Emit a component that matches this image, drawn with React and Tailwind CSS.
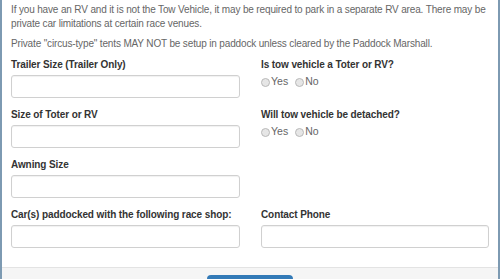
export default function App() {
  const Radio = ({ label }) => (
    <span className="flex items-center">
      <span className="inline-block h-[9px] w-[9px] rounded-full border border-[#b9b9b9] bg-[#e6e6e6]" />
      <span className="ml-[1px]">{label}</span>
    </span>
  );

  const Field = ({ label }) => (
    <div className="h-[50px]">
      <div className="h-[14px] whitespace-nowrap text-[10px] font-bold leading-[14px] tracking-[-0.1px] text-[#333]">{label}</div>
      <div className="mt-[3px] h-[23px] rounded-[3px] border border-[#d0d0d0] bg-white shadow-[inset_0_1px_1px_rgba(0,0,0,0.06)]" />
    </div>
  );

  const RadioField = ({ label }) => (
    <div className="h-[50px]">
      <div className="h-[14px] whitespace-nowrap text-[10px] font-bold leading-[14px] tracking-[-0.1px] text-[#333]">{label}</div>
      <div className="mt-[3px] flex h-[14px] items-center gap-[7px] text-[10.5px] text-[#666]">
        <Radio label="Yes" />
        <Radio label="No" />
      </div>
    </div>
  );

  return (
    <div
      className="flex h-[279px] w-[500px] flex-col overflow-hidden border-l-2 border-r-2 border-[#7d9ab2] bg-white"
      style={{ fontFamily: '"Liberation Sans", Arial, sans-serif' }}
    >
      <div className="flex-1 px-[9px] pt-[3px]">
        <p className="text-[10px] leading-[14px] tracking-[-0.15px] text-[#666]">
          If you have an RV and it is not the Tow Vehicle, it may be required to park in a separate RV area. There may be private car limitations at certain race venues.
        </p>
        <p className="mt-[6px] text-[10px] leading-[14px] tracking-[-0.15px] text-[#666]">
          Private "circus-type" tents MAY NOT be setup in paddock unless cleared by the Paddock Marshall.
        </p>
        <div className="mt-[7px] grid grid-cols-[229px_228px] gap-x-[21px]">
          <Field label="Trailer Size (Trailer Only)" />
          <RadioField label="Is tow vehicle a Toter or RV?" />
          <Field label="Size of Toter or RV" />
          <RadioField label="Will tow vehicle be detached?" />
          <Field label="Awning Size" />
          <div />
          <Field label="Car(s) paddocked with the following race shop:" />
          <Field label="Contact Phone" />
        </div>
      </div>
      <div className="h-[12px] shrink-0 border-t border-[#e3e3e3] bg-[#f5f5f5]">
        <div className="ml-[205px] mt-[7px] h-[10px] w-[86px] rounded-t-[4px] bg-[#337ab7]" />
      </div>
    </div>
  );
}
